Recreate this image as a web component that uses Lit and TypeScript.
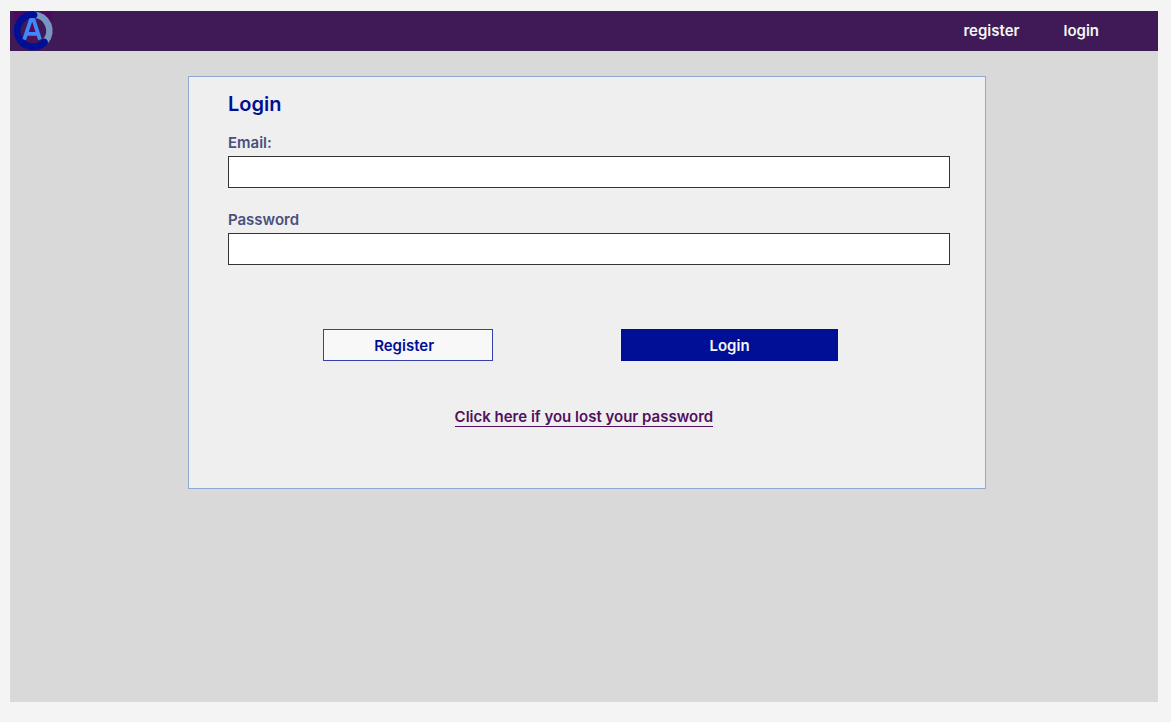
import { LitElement, html, css } from "lit";
import { customElement } from "lit/decorators.js";

@customElement("app-logo")
class AppLogo extends LitElement {
  static styles = css`
    :host { display: block; }
    .mark { display: block; width: 40px; height: 40px; }
  `;

  render() {
    return html`
      <svg class="mark" viewBox="0 0 40 40" role="img" aria-label="Home">
        <rect x="0.3" y="0.5" width="38.3" height="9" fill="#4b0a5e" />
        <circle cx="19.4" cy="19.8" r="13" fill="#3f1a57" />
        <path d="M18 12 L22 21 H14 Z M14 24 H22.5 L23.5 29 H13 Z" fill="#560b52" />
        <path d="M20 3.8 A16 16 0 0 1 31.4 30.4" fill="none" stroke="#7797c2" stroke-width="6.6" />
        <path d="M20 3.8 A16 16 0 1 0 30.4 31.2" fill="none" stroke="#000f96" stroke-width="6.8" stroke-linecap="round" />
        <path d="M10.2 28.7 L16.8 8.8 H19.6 L26 28.7 M12.6 22.8 H23.8" fill="none" stroke="#3f88fb" stroke-width="3.8" stroke-linejoin="round" />
      </svg>
    `;
  }
}

@customElement("app-root")
class AppRoot extends LitElement {
  static styles = css`
    :host {
      display: flex;
      flex-direction: column;
      min-height: 100vh;
      box-sizing: border-box;
      padding: 11px 13px 20px 10px;
      background: #f4f4f4;
      font: 600 15px/20px Inter, "Liberation Sans", sans-serif;
    }
    .page { flex: 1; background: #d9d9d9; padding-bottom: 24px; }
    .bar {
      display: flex;
      align-items: center;
      justify-content: space-between;
      height: 40px;
      padding: 0 59px 0 4px;
      background: #3f1a57;
    }
    .links { display: flex; gap: 44px; }
    .links a { color: #f5f5f5; text-decoration: none; }
    .card {
      box-sizing: border-box;
      min-height: 413px;
      margin: 25px 15% 0 15.5%;
      padding: 13px 35px 40px 39px;
      border: 1px solid #8fa9cf;
      background: #efefef;
    }
    h1 { margin: 0; font-size: 20px; line-height: 28px; font-weight: 600; color: #000f96; }
    .field { display: flex; flex-direction: column; margin-top: 15px; }
    .field + .field { margin-top: 22px; }
    label { color: #4b4f7c; line-height: 20px; margin-bottom: 3px; }
    input {
      box-sizing: border-box;
      width: 100%;
      height: 32px;
      padding: 0 8px;
      border: 1px solid #333;
      border-radius: 0;
      background: #fff;
      font: inherit;
    }
    .actions {
      display: grid;
      grid-template-columns: 170fr 216fr;
      column-gap: 128px;
      margin: 64px 112px 0 95px;
    }
    button {
      height: 32px;
      padding: 2px 0 0;
      border: 1px solid #000f96;
      font: inherit;
      cursor: pointer;
    }
    .secondary { padding-right: 8px; background: #f8f8f8; color: #000f96; border-color: #3440ae; }
    .primary { background: #000f96; color: #f5f5f5; }
    .lost { margin: 46px 10px 0 0; text-align: center; }
    .lost a {
      display: inline-block;
      line-height: 18px;
      border-bottom: 1px solid #530f60;
      color: #530f60;
      text-decoration: none;
    }
  `;

  render() {
    return html`
      <div class="page">
        <header class="bar">
          <app-logo></app-logo>
          <nav class="links">
            <a href="#register">register</a>
            <a href="#login">login</a>
          </nav>
        </header>
        <main>
          <form class="card" @submit=${(e: Event) => e.preventDefault()}>
            <h1>Login</h1>
            <div class="field">
              <label for="email">Email:</label>
              <input id="email" type="email" autocomplete="email" />
            </div>
            <div class="field">
              <label for="password">Password</label>
              <input id="password" type="password" autocomplete="current-password" />
            </div>
            <div class="actions">
              <button class="secondary" type="button">Register</button>
              <button class="primary" type="submit">Login</button>
            </div>
            <p class="lost"><a href="#lost">Click here if you lost your password</a></p>
          </form>
        </main>
      </div>
    `;
  }
}
